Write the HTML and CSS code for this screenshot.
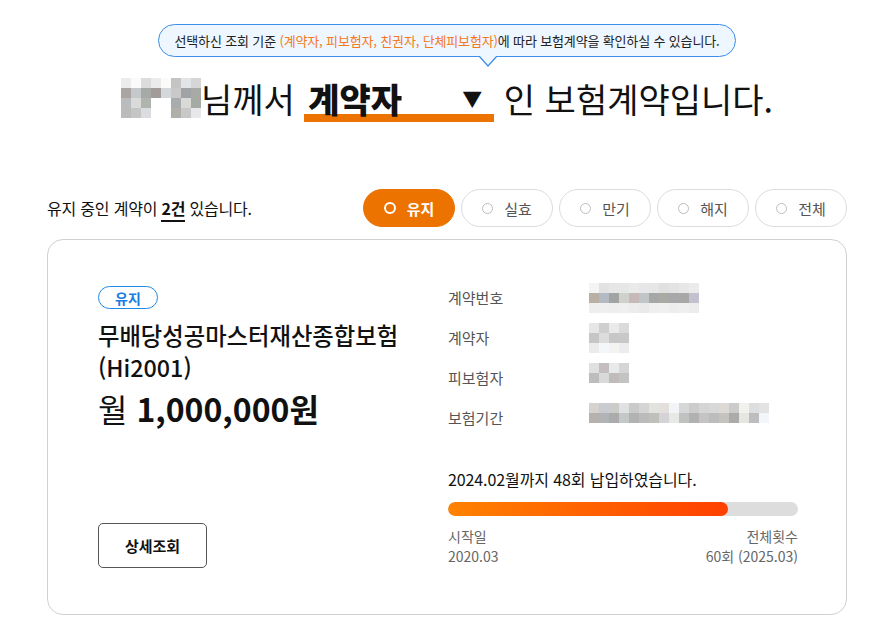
FILE: index.html
```html
<!DOCTYPE html>
<html lang="ko">

<head>
    <meta charset="UTF-8">
    <meta name="viewport" content="width=device-width, initial-scale=1.0">
    <title>보험계약 조회</title>
    <link rel="stylesheet" href="styles.css">
</head>

<body>
    <div class="page">
        <div class="guide">
            <div class="bubble">선택하신 조회 기준 <span class="hl">(계약자, 피보험자, 친권자, 단체피보험자)</span>에 따라 보험계약을 확인하실 수 있습니다.</div>
        </div>

        <h1 class="heading"><span class="mask"><span class="mosaic" data-key="name"></span></span>님께서 <span class="select">계약자<span class="arrow">▼</span></span> 인 보험계약입니다.</h1>

        <div class="filter-row">
            <p class="count">유지 중인 계약이 <strong>2건</strong> 있습니다.</p>
            <div class="filters">
                <button class="pill active"><i class="dot"></i>유지</button>
                <button class="pill"><i class="dot"></i>실효</button>
                <button class="pill"><i class="dot"></i>만기</button>
                <button class="pill"><i class="dot"></i>해지</button>
                <button class="pill"><i class="dot"></i>전체</button>
            </div>
        </div>

        <div class="card">
            <div class="card-left">
                <span class="badge">유지</span>
                <h2 class="product">무배당성공마스터재산종합보험<br>(Hi2001)</h2>
                <p class="price">월 <strong>1,000,000원</strong></p>
                <button class="detail-btn">상세조회</button>
            </div>
            <div class="card-right">
                <dl class="info">
                    <div class="info-row">
                        <dt>계약번호</dt>
                        <dd><span class="mosaic" data-key="number"></span></dd>
                    </div>
                    <div class="info-row">
                        <dt>계약자</dt>
                        <dd><span class="mosaic" data-key="holder"></span></dd>
                    </div>
                    <div class="info-row">
                        <dt>피보험자</dt>
                        <dd><span class="mosaic" data-key="insured"></span></dd>
                    </div>
                    <div class="info-row">
                        <dt>보험기간</dt>
                        <dd><span class="mosaic" data-key="period"></span></dd>
                    </div>
                </dl>

                <div class="payment">
                    <p class="payment-text">2024.02월까지 48회 납입하였습니다.</p>
                    <div class="progress">
                        <div class="progress-fill" data-paid="48" data-total="60"></div>
                    </div>
                    <div class="payment-meta">
                        <div>
                            <span class="meta-label">시작일</span>
                            <span class="meta-value">2020.03</span>
                        </div>
                        <div class="meta-end">
                            <span class="meta-label">전체횟수</span>
                            <span class="meta-value">60회 (2025.03)</span>
                        </div>
                    </div>
                </div>
            </div>
        </div>
    </div>

    <script>
        // masked personal data - pixel blocks
        const masks = {
            name: [
                ['#ececec', '#fafafa', '#dcdcdc', '#ebebeb', '#fbfbfa', '#c4c4c4', '#e2e5e8', '#d6d6d6'],
                ['#aaa5a3', '#c5c9cc', '#a6aaa6', '#a19c98', '#d4d8dc', '#c9c9c9', '#9fa3a5', '#a9aaa5'],
                ['#b9bcbf', '#dadada', '#b0b4ae', '#ffffff', '#ffffff', '#a9acac', '#d9dad6', '#a6aaa5'],
                ['#bbbbbb', '#c5c5c5', '#dbdcdf', '#ffffff', '#ffffff', '#b0b0a8', '#c8c8c8', '#e8e8ea']
            ],
            number: [
                ['#f4f4f4', '#e2e2e2', '#e6e6e6', '#e5e7e6', '#eaeaea', '#e7e7e9', '#e6e6e6', '#e0e0e0', '#e3e3e3', '#e7e7e7', '#ebebeb'],
                ['#b8b0a2', '#b3bac3', '#a2a3a3', '#cfd1cc', '#c7b8ba', '#c0c5c8', '#a6a7a7', '#aaa9a2', '#a8a8ab', '#a8a8a7', '#c3c1d0'],
                ['#eeeeee', '#efefef', '#eeeeee', '#efefef', '#ececec', '#eaeaea', '#efefef', '#f0f0f0', '#ededed', '#efefef', '#ececec']
            ],
            holder: [
                ['#e6e6e6', '#cfcfcf', '#e9ebeb', '#dadada'],
                ['#c6c6c6', '#dcdcdc', '#c7c7c7', '#c8c8c8'],
                ['#ebebeb', '#f5f6f8', '#f3f3f1', '#ececee']
            ],
            insured: [
                ['#e0e0e0', '#c4bebf', '#e8e9eb', '#d5d5d5'],
                ['#bdbdbd', '#d9d9d9', '#c0bcbc', '#c3c3c3']
            ],
            period: [
                ['#d6d2cf', '#cacbd0', '#cbcbc9', '#e0e1e3', '#cacaca', '#d5d5d5', '#e1e3de', '#e2dfdc', '#f2f4f7', '#d6d8d7', '#cccccc', '#d5d5d5', '#d8d8d8', '#dddad5', '#cbcbcb', '#f2f1ed', '#dcdee0', '#e3e3e3'],
                ['#b7b1ae', '#b0b4b7', '#ababab', '#c4c8c9', '#b2b2b2', '#bbbbbb', '#c0c0ba', '#d4d4d6', '#e8e8e6', '#bfc2c1', '#b1b1b3', '#c6c4c2', '#bcbcbc', '#c5c3be', '#ababab', '#e6e6e0', '#bdbdbd', '#f2f6fb']
            ]
        };

        document.querySelectorAll('.mosaic').forEach(el => {
            const rows = masks[el.dataset.key];
            el.style.gridTemplateColumns = `repeat(${rows[0].length}, 10px)`;
            rows.forEach(row => {
                row.forEach(color => {
                    const cell = document.createElement('i');
                    cell.style.background = color;
                    el.appendChild(cell);
                });
            });
        });

        // payment progress
        document.querySelectorAll('.progress-fill').forEach(bar => {
            const paid = Number(bar.dataset.paid);
            const total = Number(bar.dataset.total);
            bar.style.width = (paid / total * 100) + '%';
        });
    </script>
</body>

</html>
```

FILE: styles.css
```css
* {
    box-sizing: border-box;
}

body {
    margin: 0;
    background-color: #fff;
    color: #111;
    font-family: "Noto Sans CJK KR", "Noto Sans", sans-serif;
}

p,
h1,
h2,
dl,
dd {
    margin: 0;
}

.page {
    width: 800px;
    margin-left: 47px;
    padding-top: 24px;
}

/* guide bubble */
.guide {
    display: flex;
    justify-content: center;
}

.bubble {
    position: relative;
    height: 33px;
    padding: 0 15px;
    border: 1px solid #3b8eea;
    border-radius: 17px;
    background-color: #eef6ff;
    font-size: 13px;
    line-height: 31px;
    letter-spacing: -0.15px;
    color: #222;
}

.bubble .hl {
    color: #f47a22;
}

.bubble::before,
.bubble::after {
    content: "";
    position: absolute;
    left: 320px;
    width: 0;
    height: 0;
    border-left: 9px solid transparent;
    border-right: 9px solid transparent;
}

.bubble::before {
    bottom: -11px;
    border-top: 10px solid #3b8eea;
}

.bubble::after {
    bottom: -9px;
    border-top: 10px solid #eef6ff;
}

/* heading */
.heading {
    margin-top: 18px;
    font-size: 34px;
    font-weight: 400;
    line-height: 48px;
    text-align: center;
    color: #111;
}

.mosaic {
    display: grid;
    width: max-content;
    grid-auto-rows: 10px;
}

.mosaic i {
    display: block;
}

.mask {
    display: inline-block;
    overflow: hidden;
    vertical-align: -5px;
}

.select {
    display: inline-flex;
    justify-content: space-between;
    align-items: center;
    width: 190px;
    padding: 0 12px 0 4px;
    border-bottom: 8px solid #ec7300;
    font-weight: 900;
    line-height: 31px;
    text-align: left;
}

.arrow {
    font-size: 20px;
    font-weight: 400;
}

/* filter row */
.filter-row {
    display: flex;
    justify-content: space-between;
    align-items: center;
    margin-top: 66px;
}

.count {
    font-size: 16px;
    letter-spacing: -0.2px;
    color: #111;
}

.count strong {
    font-weight: 700;
    border-bottom: 2px solid #111;
}

.filters {
    display: flex;
    gap: 6px;
}

.pill {
    display: flex;
    justify-content: center;
    align-items: center;
    gap: 11px;
    width: 92px;
    height: 38px;
    padding: 0;
    border: 1px solid #dcdcdc;
    border-radius: 19px;
    background-color: #fff;
    font-family: inherit;
    font-size: 15px;
    color: #555;
    cursor: pointer;
}

.dot {
    width: 11px;
    height: 11px;
    border: 1.5px solid #bdbdbd;
    border-radius: 50%;
}

.pill.active {
    border-color: #ec7300;
    background-color: #ec7300;
    color: #fff;
    font-weight: 700;
}

.pill.active .dot {
    width: 12px;
    height: 12px;
    border: 2px solid #fff;
}

/* card */
.card {
    display: grid;
    grid-template-columns: 350px 350px;
    margin-top: 12px;
    padding: 43px 50px 46px;
    border: 1px solid #d0d0d0;
    border-radius: 16px;
}

.card-left {
    display: flex;
    flex-direction: column;
    align-items: flex-start;
}

.card-right {
    padding-bottom: 2px;
}

.badge {
    display: inline-flex;
    align-items: center;
    height: 23px;
    margin-top: 3px;
    padding: 0 16px;
    border: 1px solid #1e88e5;
    border-radius: 12px;
    font-size: 14px;
    font-weight: 700;
    color: #1a7de0;
}

.product {
    margin-top: 10px;
    font-size: 23.3px;
    font-weight: 500;
    line-height: 32px;
    color: #111;
}

.price {
    margin-top: 5px;
    font-size: 32px;
    line-height: 40px;
    color: #111;
}

.price strong {
    font-weight: 700;
}

.detail-btn {
    margin-top: auto;
    width: 109px;
    height: 45px;
    border: 1px solid #555;
    border-radius: 5px;
    background-color: #fff;
    font-family: inherit;
    font-size: 15px;
    font-weight: 700;
    color: #111;
    cursor: pointer;
}

.info-row {
    display: flex;
    height: 40px;
}

.info-row dt {
    width: 141px;
    font-size: 15px;
    line-height: 30px;
    color: #555;
}

.payment {
    margin-top: 24px;
}

.payment-text {
    font-size: 16px;
    line-height: 24px;
    letter-spacing: -0.1px;
    color: #111;
}

.progress {
    height: 14px;
    margin-top: 11px;
    border-radius: 7px;
    background-color: #dddddd;
    overflow: hidden;
}

.progress-fill {
    height: 100%;
    border-radius: 7px;
    background: linear-gradient(to right, #ff8200, #ff4000);
}

.payment-meta {
    display: flex;
    justify-content: space-between;
    margin-top: 10px;
    font-size: 14px;
    line-height: 20px;
    color: #666;
}

.payment-meta span {
    display: block;
}

.meta-end {
    text-align: right;
}
```
